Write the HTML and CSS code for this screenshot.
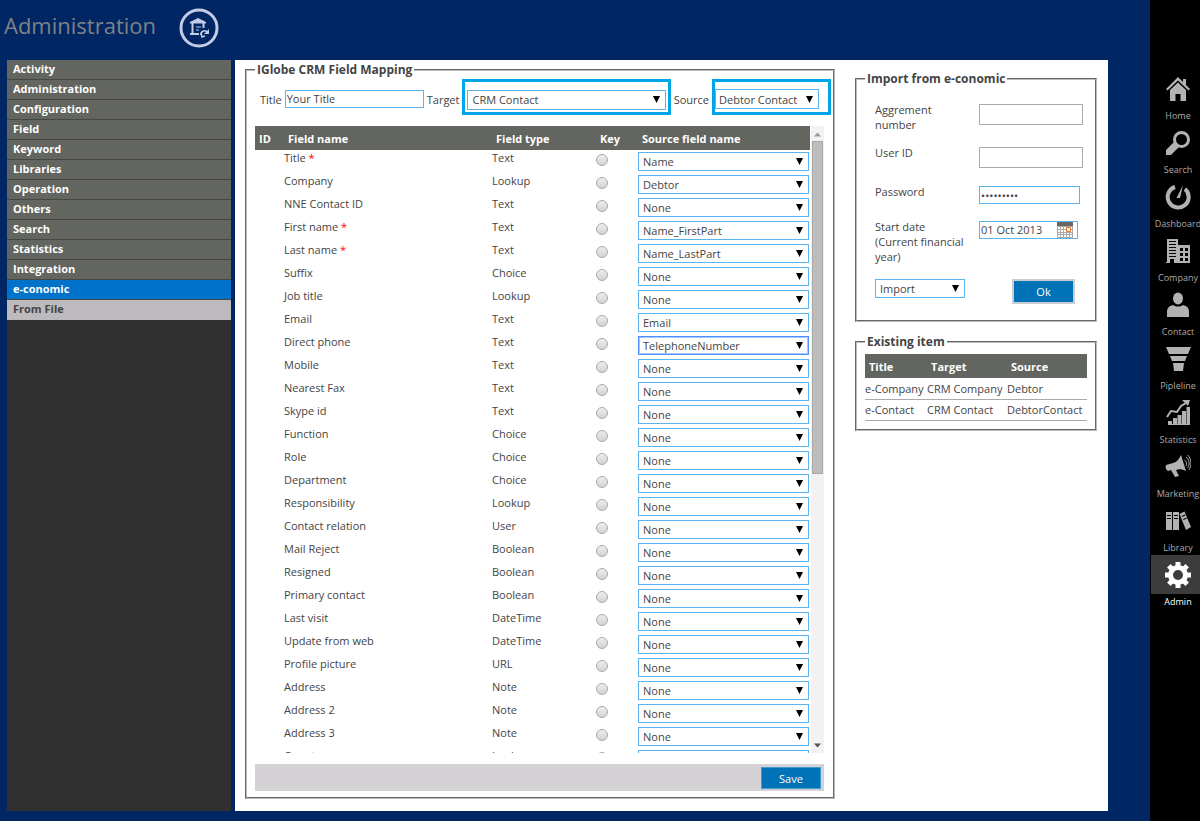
FILE: index.html
```html
<!DOCTYPE html>
<html lang="en">
<head>
    <meta charset="UTF-8">
    <meta name="viewport" content="width=device-width, initial-scale=1.0">
    <title>Administration</title>
    <link rel="stylesheet" href="styles.css">
</head>
<body>
    <div class="page">
        <header class="header">
            <h1>Administration</h1>
            <svg class="logo" viewBox="0 0 40 40" fill="none" stroke="#c3cbe6">
                <circle cx="20" cy="20" r="18" stroke-width="3"/>
                <path d="M11 15.5V14L19 10l8 4v1.5z" fill="#c3cbe6" stroke="none"/>
                <path d="M13.5 15v10M24.5 15v5M11 26h9" stroke-width="2"/>
                <path d="M17 19h5M17 22h3" stroke-width="1"/>
                <path d="M22 27a3.500 3.500 0 0 1 6-3" stroke-width="1.500"/>
                <path d="M30 21v5h-5z" fill="#c3cbe6" stroke="none"/>
                <path d="M22 25l1 4 3-1" stroke-width="1.500"/>
            </svg>
        </header>
        <div class="columns">
            <nav class="sidebar">
                <a href="#">Activity</a>
                <a href="#">Administration</a>
                <a href="#">Configuration</a>
                <a href="#">Field</a>
                <a href="#">Keyword</a>
                <a href="#">Libraries</a>
                <a href="#">Operation</a>
                <a href="#">Others</a>
                <a href="#">Search</a>
                <a href="#">Statistics</a>
                <a href="#">Integration</a>
                <a href="#" class="active">e-conomic</a>
                <a href="#" class="sub">From File</a>
            </nav>
            <main class="content">
                <form class="mapping">
                    <fieldset>
                        <legend>IGlobe CRM Field Mapping</legend>
                        <div class="filters">
                            <label for="title">Title</label>
                            <input type="text" id="title" class="title-input" value="Your Title">
                            <label for="target">Target</label>
                            <span class="highlight target-box">
                                <select id="target"><option>CRM Contact</option><option>CRM Company</option></select>
                            </span>
                            <label for="source">Source</label>
                            <span class="highlight source-box">
                                <select id="source"><option>Debtor Contact</option><option>Debtor</option></select>
                            </span>
                        </div>
                        <div class="grid">
                            <div class="grid-scroll">
                                <table class="fields">
                                    <thead>
                                        <tr>
                                            <th class="col-id">ID</th>
                                            <th class="col-name">Field name</th>
                                            <th class="col-type">Field type</th>
                                            <th class="col-key">Key</th>
                                            <th class="col-source">Source field name</th>
                                        </tr>
                                    </thead>
                                    <tbody id="fieldRows"></tbody>
                                </table>
                            </div>
                            <div class="scrollbar">
                                <svg viewBox="0 0 13 14"><path d="M3 10l3.500-4L10 10z" fill="#999"/></svg>
                                <div class="thumb"></div>
                                <svg class="down" viewBox="0 0 13 14"><path d="M3 5h7L6.500 9z" fill="#555"/></svg>
                            </div>
                        </div>
                        <div class="actions">
                            <button type="button" class="btn">Save</button>
                        </div>
                    </fieldset>
                </form>

                <div class="side">
                    <form>
                        <fieldset>
                            <legend>Import from e-conomic</legend>
                            <div class="import">
                                <label for="agreement">Aggrement number</label>
                                <input type="text" id="agreement" class="plain">
                                <label for="userId">User ID</label>
                                <input type="text" id="userId" class="plain">
                                <label for="password">Password</label>
                                <input type="password" id="password" value="economic1">
                                <label for="startDate">Start date (Current financial year)</label>
                                <div class="date">
                                    <input type="text" id="startDate" value="01 Oct 2013">
                                    <svg viewBox="0 0 16 16">
                                        <path d="M0 0h16v16H0z" fill="#aaa"/>
                                        <path d="M0 0h16v4H0z" fill="#6b6560"/>
                                        <path d="M1 5h2v2H1zM4 5h2v2H4zM7 5h2v2H7zM13 5h2v2h-2zM1 8h2v2H1zM4 8h2v2H4zM7 8h2v2H7zM13 8h2v2h-2zM1 11h2v1H1zM4 11h2v1H4zM7 11h2v1H7zM10 11h2v1h-2zM13 11h2v1h-2zM1 13h2v2H1zM4 13h2v2H4zM7 13h2v2H7zM10 13h2v2h-2zM13 13h2v2h-2z" fill="#fff"/>
                                        <path d="M9.500 5.500h4v4h-4z" fill="#fff" stroke="#e8762c"/>
                                    </svg>
                                </div>
                                <select aria-label="Action"><option>Import</option><option>Export</option></select>
                                <button type="button" class="btn ok">Ok</button>
                            </div>
                        </fieldset>
                    </form>
                    <fieldset>
                        <legend>Existing item</legend>
                        <table class="items">
                            <thead>
                                <tr><th>Title</th><th>Target</th><th>Source</th></tr>
                            </thead>
                            <tbody>
                                <tr><td>e-Company</td><td>CRM Company</td><td>Debtor</td></tr>
                                <tr><td>e-Contact</td><td>CRM Contact</td><td>DebtorContact</td></tr>
                            </tbody>
                        </table>
                    </fieldset>
                </div>
            </main>
        </div>
    </div>

    <nav class="appbar">
        <a href="#">
            <span class="icon"><svg viewBox="0 0 26 26"><path d="M13 1l5 5V3h3v6l4 4-1.500 1.500L13 4.500 2.500 14.500 1 13z"/><path d="M13 6.500l8 7.500v11h-5.500v-7h-5v7H5V14z"/></svg></span>
            Home
        </a>
        <a href="#">
            <span class="icon"><svg viewBox="0 0 26 26"><circle cx="16.500" cy="9.500" r="7" fill="none" stroke="#b3b1b4" stroke-width="3"/><path d="M9 12l5 5-8 8H1v-5z"/></svg></span>
            Search
        </a>
        <a href="#">
            <span class="icon"><svg viewBox="0 0 26 26"><path d="M10 3a10.500 10.500 0 1 0 10 2" fill="none" stroke="#b3b1b4" stroke-width="4"/><path d="M18 1l-3 13h-3.500z"/></svg></span>
            Dashboard
        </a>
        <a href="#">
            <span class="icon"><svg viewBox="0 0 26 26"><path fill-rule="evenodd" d="M2 1h11v6h12v18H1v-1h1zM4 3v1h7V3zM4 6v1h7V6zM4 9v1h7V9zM4 12v1h7v-1zM4 15v1h7v-1zM4 18v1h7v-1zM5 21v4h4v-4zM15 10v3h3v-3zM20 10v3h3v-3zM15 15v3h3v-3zM20 15v3h3v-3zM15 20v3h3v-3zM20 20v3h3v-3z"/></svg></span>
            Company
        </a>
        <a href="#">
            <span class="icon"><svg viewBox="0 0 26 26"><ellipse cx="13" cy="6.500" rx="5" ry="6"/><path d="M2 25v-5c0-4 2-6 6-7 3 2 7 2 10 0 4 1 6 3 6 7v5z"/></svg></span>
            Contact
        </a>
        <a href="#">
            <span class="icon"><svg viewBox="0 0 26 26"><path d="M1 1h25l-3 7H4zM5 10h17l-2 5H7zM8 17h11l-1 8H9z"/></svg></span>
            Pipleline
        </a>
        <a href="#">
            <span class="icon"><svg viewBox="0 0 26 26"><path d="M3 21h4v4H3zM8 18h4v7H8zM12.500 15h4v10h-4zM17 11h4v14h-4zM21.500 7h3.500v18h-3.500zM3 24h22v1H3z"/><path d="M2 17l4-6 6 1 4-6 5-3" fill="none" stroke="#b3b1b4" stroke-width="2"/><path d="M17 0h8l-2 6z"/></svg></span>
            Statistics
        </a>
        <a href="#">
            <span class="icon"><svg viewBox="0 0 26 26"><path d="M1 11l7-2c4-1 6-4 8-8l5 16c-4-2-7-2-10-1l3 6-4 1-4-7-3 1c-2-1-3-4-2-6z"/><path d="M19.500 6c2 1 2.500 4 1.500 6M21 3c3.500 2 4 8 1.500 11M22.500 1c4.500 4 4 11 1.500 15" fill="none" stroke="#b3b1b4"/></svg></span>
            Marketing
        </a>
        <a href="#">
            <span class="icon"><svg viewBox="0 0 26 26"><path fill-rule="evenodd" d="M1 4h6v18H1zM2 7v1h4V7zM2 10v1h4v-1zM8 4h6v18H8zM9 7v1h4V7zM9 10v1h4v-1z"/><path fill-rule="evenodd" d="M14.500 6l5-2.500L26 19l-5 3zM16.500 8l.5 1 3.500-1.500-.5-1zM18 11l.5 1 3.500-1.500-.5-1z"/></svg></span>
            Library
        </a>
        <a href="#" class="current">
            <span class="icon"><svg viewBox="0 0 26 26"><circle cx="13" cy="13" r="7.500" fill="none" stroke="#fff" stroke-width="5"/><path d="M13 0v5M13 21v5M0 13h5M21 13h5M3.800 3.800l3.500 3.500M18.700 18.700l3.500 3.500M3.800 22.200l3.500-3.500M18.700 7.300l3.500-3.500" stroke="#fff" stroke-width="5"/></svg></span>
            Admin
        </a>
    </nav>

    <script src="script.js"></script>
</body>
</html>
```
FILE: styles.css
```css
* {
    box-sizing: border-box;
}

body {
    margin: 0;
    display: flex;
    min-height: 100vh;
    overflow: hidden;
    background-color: #002663;
    color: #444;
    font-family: "Open Sans", "Noto Sans", sans-serif;
    font-size: 11px;
    line-height: 15px;
}

a {
    text-decoration: none;
}

.page {
    flex: 1;
    display: flex;
    flex-direction: column;
    padding: 0 42px 10px 7px;
}

.header {
    display: flex;
    align-items: center;
    gap: 23px;
    height: 60px;
    padding-bottom: 5px;
    margin-left: -3px;
}

.header h1 {
    margin: 0;
    padding-bottom: 5px;
    color: #7d8389;
    font-size: 22px;
    font-weight: normal;
    line-height: 30px;
}

.logo {
    width: 40px;
    height: 40px;
}

.columns {
    flex: 1;
    display: flex;
    gap: 4px;
}

/* left menu */
.sidebar {
    width: 224px;
    background-color: #303030;
}

.sidebar a {
    display: block;
    height: 20px;
    padding-left: 6px;
    border-bottom: 1px solid #464745;
    background-color: #636560;
    color: white;
    font-weight: bold;
    line-height: 18px;
}

.sidebar .active {
    background-color: #0072c9;
}

.sidebar .sub {
    background-color: #bcbabd;
    border-bottom-color: #bcbabd;
    color: #444;
}

.content {
    flex: 1;
    display: flex;
    align-items: flex-start;
    gap: 20px;
    padding: 0 11px 0 10px;
    background-color: white;
}

.mapping {
    flex: 1;
}

fieldset {
    min-width: 0;
    margin: 0;
    padding: 0 8px;
    border: 2px groove #bbb;
}

legend {
    padding: 0 2px;
    color: #444;
    font-size: 12px;
    font-weight: bold;
    line-height: 19px;
}

input,
select {
    height: 18px;
    margin: 0;
    padding: 0 1px;
    border: 1px solid #5ab4f0;
    border-radius: 0;
    background-color: white;
    color: #444;
    font-family: inherit;
    font-size: 11px;
}

select {
    height: 20px;
    padding: 0 4px;
    appearance: none;
    background-image: url("data:image/svg+xml,%3Csvg xmlns='http://www.w3.org/2000/svg' width='7' height='7'%3E%3Cpath d='M0 0h7L3.5 7z'/%3E%3C/svg%3E");
    background-repeat: no-repeat;
    background-position: right 5px center;
}

.filters {
    display: flex;
    align-items: center;
    gap: 3px;
    height: 36px;
    margin: 0 -6px 11px 0;
    padding-left: 5px;
    white-space: nowrap;
}

.filters label {
    padding-top: 4px;
}

.title-input {
    width: 139px;
    margin-top: 3px;
}

.highlight {
    display: flex;
    align-items: center;
    height: 36px;
    border: 3px solid #00a5e6;
    padding: 5px 2px 0;
}

.target-box {
    flex: 1;
}

.target-box select {
    width: 100%;
}

.source-box {
    width: 119px;
    padding: 4px 0 0;
}

.source-box select {
    width: 104px;
    padding: 0 3px;
}

/* field grid */
.grid {
    display: flex;
    gap: 1px;
    height: 627px;
    padding-right: 1px;
}

.grid-scroll {
    flex: 1;
    overflow: hidden;
}

table {
    width: 100%;
    border-collapse: collapse;
}

th {
    height: 24px;
    padding: 0 4px;
    background-color: #636560;
    color: white;
    text-align: left;
}

.fields {
    table-layout: fixed;
}

.fields td {
    height: 23px;
    padding: 0;
    vertical-align: top;
    line-height: 15px;
}

.col-id {
    width: 29px;
}

.col-name {
    width: 208px;
}

.col-type {
    width: 96px;
}

.col-key {
    width: 50px;
    padding-left: 12px;
}

.fields td input {
    display: block;
    appearance: none;
    width: 12px;
    height: 12px;
    margin: 4px 0 0 8px;
    border: 1px solid #aaa;
    border-radius: 50%;
    background-image: linear-gradient(#eee, #d2d2d2);
}

.fields td select {
    display: block;
    width: calc(100% - 1px);
    height: 19px;
    margin-top: 2px;
}

.fields .selected {
    border-color: #4d90fe;
    box-shadow: inset 0 0 0 1px #a8c8fc;
}

.required {
    color: red;
}

.scrollbar {
    display: flex;
    flex-direction: column;
    align-items: center;
    width: 13px;
    background-color: #f4f1f5;
}

.scrollbar svg {
    width: 13px;
    height: 15px;
}

.scrollbar .down {
    margin-top: auto;
}

.thumb {
    width: 11px;
    height: 333px;
    border: 1px solid #a8a8a8;
    background-color: #bdbdbd;
}

.actions {
    display: flex;
    justify-content: flex-end;
    height: 27px;
    margin: 11px 1px 6px 0;
    padding: 3px 3px 2px;
    background-color: #d4d2d5;
}

.btn {
    width: 60px;
    border: 1px solid #3f9bd0;
    background-color: #0072b8;
    color: white;
    font-family: inherit;
    font-size: 11px;
    padding: 0;
    cursor: pointer;
}

/* right column */
.side {
    width: 242px;
    display: flex;
    flex-direction: column;
    gap: 10px;
    margin-top: 9px;
}

.import {
    display: grid;
    grid-template-columns: 104px 104px;
    grid-template-rows: 43px 39px 35px 58px 43px;
    align-items: start;
    padding: 14px 0 0 10px;
}

.import > input,
.import > select,
.date,
.ok {
    margin-top: 2px;
}

.import label {
    max-width: 90px;
}

.import .plain {
    width: 104px;
    height: 21px;
    border-color: #aaa;
}

#password {
    width: 101px;
    -webkit-text-security: square;
}

.import select {
    width: 90px;
    height: 19px;
}

.date {
    display: flex;
    align-items: center;
    width: 99px;
    height: 18px;
    padding-right: 4px;
    border: 1px solid #5ab4f0;
}

.date input {
    flex: 1;
    min-width: 0;
    height: 16px;
    padding-bottom: 1px;
    border: 0;
}

.date svg {
    width: 16px;
    height: 16px;
}

.ok {
    width: 63px;
    height: 25px;
    margin-left: 33px;
    border: 2px solid #c9cdd1;
}

.items {
    width: 222px;
    margin: 3px 0 8px;
    white-space: nowrap;
}

.items td {
    height: 21px;
    padding: 0;
    border-bottom: 1px solid #aaa;
}

/* module bar on the right edge */
.appbar {
    width: 50px;
    padding-top: 69px;
    background-color: black;
}

.appbar a {
    display: flex;
    flex-direction: column;
    align-items: center;
    width: 56px;
    height: 54px;
    color: #aaa;
    font-size: 9px;
}

.icon {
    display: flex;
    align-items: center;
    justify-content: center;
    width: 54px;
    height: 39px;
}

.icon svg {
    width: 26px;
    height: 26px;
    fill: #b3b1b4;
}

.appbar .current {
    color: white;
}

.current .icon {
    background-color: #3c3c3c;
}
```
FILE: script.js
```js
// name, type, mapped source field, required
var fields = [
    ["Title", "Text", "Name", true],
    ["Company", "Lookup", "Debtor"],
    ["NNE Contact ID", "Text", "None"],
    ["First name", "Text", "Name_FirstPart", true],
    ["Last name", "Text", "Name_LastPart", true],
    ["Suffix", "Choice", "None"],
    ["Job title", "Lookup", "None"],
    ["Email", "Text", "Email"],
    ["Direct phone", "Text", "TelephoneNumber"],
    ["Mobile", "Text", "None"],
    ["Nearest Fax", "Text", "None"],
    ["Skype id", "Text", "None"],
    ["Function", "Choice", "None"],
    ["Role", "Choice", "None"],
    ["Department", "Choice", "None"],
    ["Responsibility", "Lookup", "None"],
    ["Contact relation", "User", "None"],
    ["Mail Reject", "Boolean", "None"],
    ["Resigned", "Boolean", "None"],
    ["Primary contact", "Boolean", "None"],
    ["Last visit", "DateTime", "None"],
    ["Update from web", "DateTime", "None"],
    ["Profile picture", "URL", "None"],
    ["Address", "Note", "None"],
    ["Address 2", "Note", "None"],
    ["Address 3", "Note", "None"],
    ["Country", "Lookup", "None"]
];
var sources = ["None", "Name", "Debtor", "Name_FirstPart", "Name_LastPart", "Email", "TelephoneNumber"];

var html = "";
fields.forEach(function (field, i) {
    var options = sources.map(function (s) {
        return "<option" + (s === field[2] ? " selected" : "") + ">" + s + "</option>";
    }).join("");
    var cls = field[2] === "TelephoneNumber" ? ' class="selected"' : "";

    html += "<tr><td></td>" +
        '<td><label for="field' + i + '">' + field[0] + (field[3] ? ' <span class="required">*</span>' : "") + "</label></td>" +
        "<td>" + field[1] + "</td>" +
        '<td><input type="radio" name="key" aria-label="Key ' + field[0] + '"></td>' +
        '<td><select id="field' + i + '"' + cls + ">" + options + "</select></td></tr>";
});
document.getElementById("fieldRows").innerHTML = html;
```
